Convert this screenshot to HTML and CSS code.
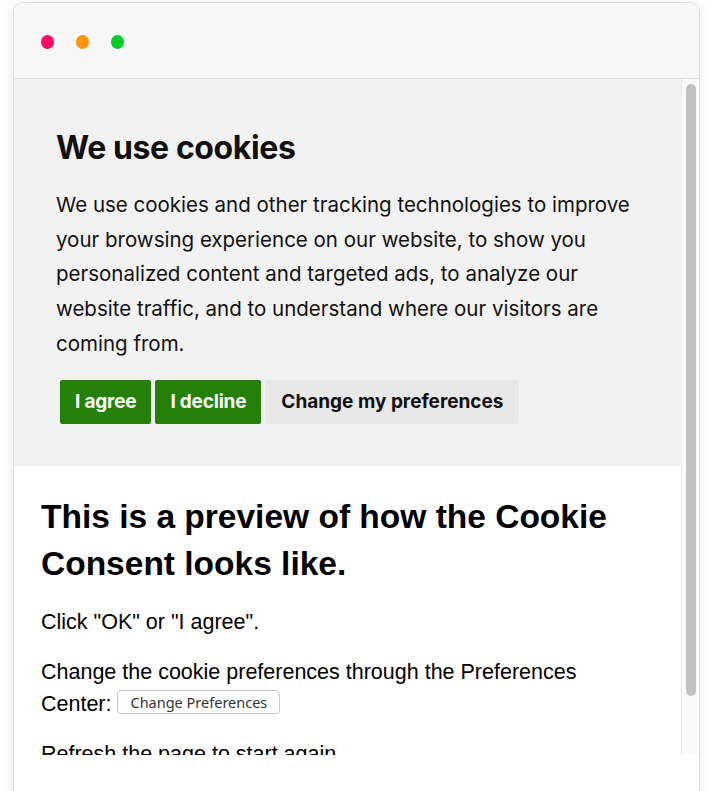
FILE: index.html
```html
<!DOCTYPE html>
<html lang="en">
<head>
    <meta charset="UTF-8">
    <meta name="viewport" content="width=device-width, initial-scale=1.0">
    <title>Cookie Consent preview</title>
    <link rel="stylesheet" href="styles.css">
</head>
<body>
    <div class="window">
        <div class="titlebar">
            <span class="dot dot-red"></span>
            <span class="dot dot-orange"></span>
            <span class="dot dot-green"></span>
        </div>
        <div class="viewport">
            <div class="page">
                <section class="cc-banner">
                    <h2 class="cc-title">We use cookies</h2>
                    <p class="cc-text">We use cookies and other tracking technologies to improve your browsing experience on our website, to show you personalized content and targeted ads, to analyze our website traffic, and to understand where our visitors are coming from.</p>
                    <div class="cc-buttons">
                        <button class="cc-btn cc-btn-green">I agree</button>
                        <button class="cc-btn cc-btn-green">I decline</button>
                        <button class="cc-btn cc-btn-grey">Change my preferences</button>
                    </div>
                </section>
                <main class="preview">
                    <h1>This is a preview of how the Cookie Consent looks like.</h1>
                    <p>Click "OK" or "I agree".</p>
                    <p>Change the cookie preferences through the Preferences Center: <button class="small-btn">Change Preferences</button></p>
                    <p>Refresh the page to start again.</p>
                </main>
            </div>
            <div class="scrollbar"><div class="thumb"></div></div>
        </div>
        <div class="window-bottom"></div>
    </div>
</body>
</html>
```

FILE: styles.css
```css
html, body {
    margin: 0;
    height: 100%;
    overflow: hidden;
    background: #fff;
}
body {
    padding: 2px 20px 0 13px;
}
.window {
    width: 687px;
    box-sizing: border-box;
    border: 1px solid #dcdcdc;
    border-radius: 10px 10px 0 0;
    overflow: hidden;
    background: #fff;
    box-shadow: 0 2px 14px rgba(0, 0, 0, 0.09);
}
.titlebar {
    height: 72px;
    background: #f7f7f7;
    border-bottom: 1px solid #dedede;
    display: flex;
    align-items: center;
    gap: 22px;
    padding: 3px 0 0 27px;
}
.dot {
    width: 13px;
    height: 14px;
    border-radius: 50%;
}
.dot-red { background: #ff0a66; }
.dot-orange { background: #fd9410; }
.dot-green { background: #05cc27; }

.viewport {
    display: flex;
    height: 676px;
}
.page {
    flex: 1;
    overflow: hidden;
}
.scrollbar {
    width: 18px;
    background: #fafafa;
    border-left: 1px solid #e9e9e9;
    box-sizing: border-box;
    padding: 5px 3px 0 4px;
}
.thumb {
    height: 612px;
    background: #c2c2c2;
    border-radius: 6px;
}
.window-bottom {
    height: 60px;
    background: #fff;
}

.cc-banner {
    background: #f2f2f2;
    padding: 50px 42px 42px;
    font-family: Inter, "Liberation Sans", sans-serif;
    color: #111;
}
.cc-title {
    margin: 0;
    font-size: 32px;
    line-height: 38px;
    font-weight: 700;
    letter-spacing: -0.4px;
}
.cc-text {
    margin: 21px 0 0;
    font-size: 20.5px;
    line-height: 34.7px;
}
.cc-buttons {
    display: flex;
    gap: 4px;
    margin-top: 18px;
    padding-left: 4px;
}
.cc-btn {
    font-family: Inter, "Liberation Sans", sans-serif;
    font-size: 19px;
    font-weight: 700;
    line-height: 24px;
    padding: 10px 15px;
    border: none;
    border-radius: 2px;
    letter-spacing: -0.2px;
}
.cc-btn-green {
    background: #248008;
    color: #fff;
}
.cc-btn-grey {
    background: #e8e8e8;
    color: #111;
    padding: 10px 16px;
    letter-spacing: 0;
}

.preview {
    font-family: "Liberation Sans", Arial, sans-serif;
    color: #000;
    padding: 27px 52px 0 27px;
}
.preview h1 {
    margin: 0 0 19px;
    font-size: 33.5px;
    line-height: 47px;
}
.preview p {
    margin: 0 0 18px;
    font-size: 21.5px;
    line-height: 32px;
}
.small-btn {
    font-family: "Noto Sans", "Liberation Sans", sans-serif;
    font-size: 14.5px;
    color: #333;
    background: #fff;
    border: 1px solid #c8c8c8;
    border-radius: 4px;
    padding: 1px 12px;
    vertical-align: 3px;
}
```
